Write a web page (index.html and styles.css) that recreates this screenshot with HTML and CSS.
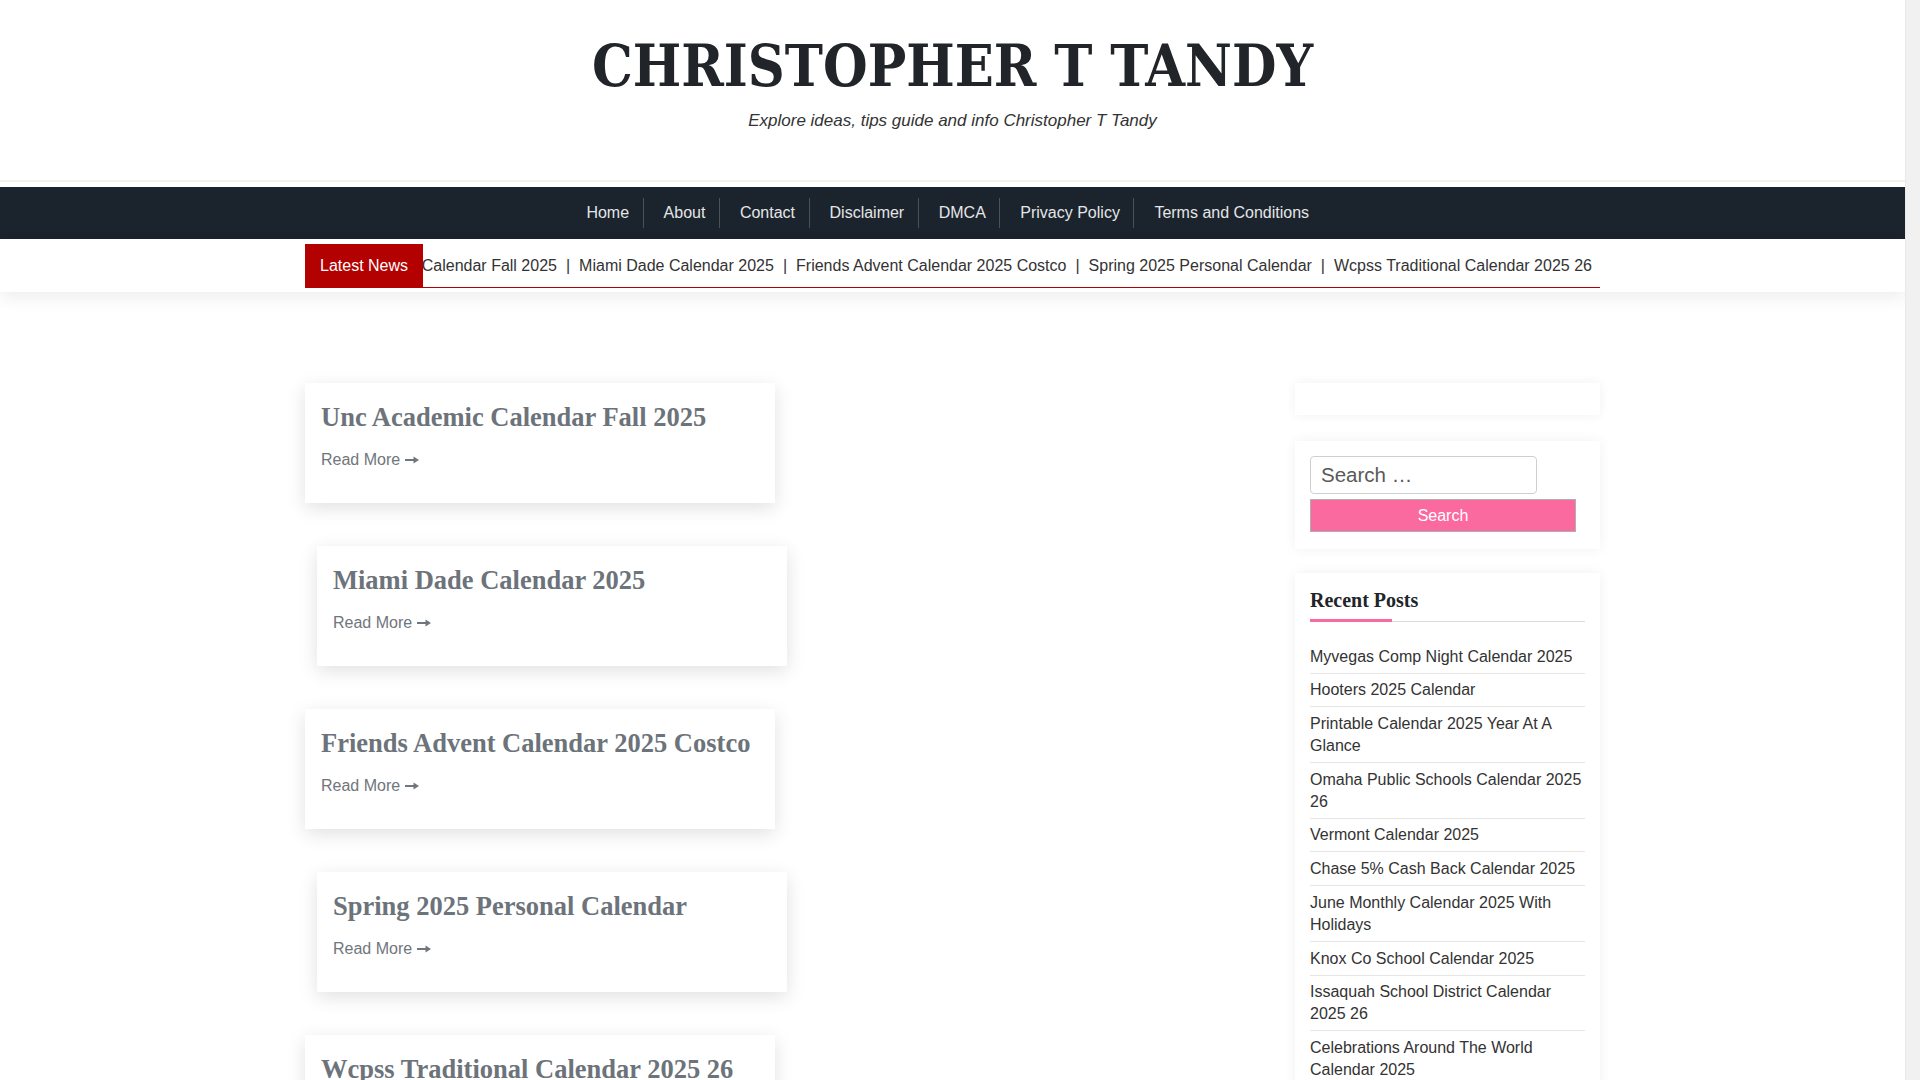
FILE: index.html
```html
<!DOCTYPE html>
<html lang="en">
<head>
<meta charset="utf-8">
<title>Christopher T Tandy</title>
<link rel="stylesheet" href="styles.css">
</head>
<body>
<div class="page">
<header class="site-header">
  <h1 class="site-title">CHRISTOPHER T TANDY</h1>
  <p class="site-desc">Explore ideas, tips guide and info Christopher T Tandy</p>
</header>
<nav class="main-nav">
  <ul class="menu">
    <li><a href="#">Home</a></li>
    <li><a href="#">About</a></li>
    <li><a href="#">Contact</a></li>
    <li><a href="#">Disclaimer</a></li>
    <li><a href="#">DMCA</a></li>
    <li><a href="#">Privacy Policy</a></li>
    <li><a href="#">Terms and Conditions</a></li>
  </ul>
</nav>
<div class="ticker-band">
  <div class="container ticker">
    <div class="ticker-label">Latest News</div>
    <div class="ticker-window">
      <div class="ticker-track"><a href="#">Unc Academic Calendar Fall 2025</a><span class="sep">|</span><a href="#">Miami Dade Calendar 2025</a><span class="sep">|</span><a href="#">Friends Advent Calendar 2025 Costco</a><span class="sep">|</span><a href="#">Spring 2025 Personal Calendar</a><span class="sep">|</span><a href="#">Wcpss Traditional Calendar 2025 26</a><span class="sep">|</span><a href="#">Myvegas Comp Night Calendar 2025</a></div>
    </div>
  </div>
</div>
<main class="container site-main">
  <section class="posts">
    <article class="card">
      <h2 class="card-title">Unc Academic Calendar Fall 2025</h2>
      <a class="read-more" href="#">Read More <svg class="arrow" viewBox="0 0 14 8" width="14" height="8"><rect x="0" y="3" width="9" height="2"/><polygon points="8.5,0.5 14,4 8.5,7.5"/></svg></a>
    </article>
    <article class="card shift">
      <h2 class="card-title">Miami Dade Calendar 2025</h2>
      <a class="read-more" href="#">Read More <svg class="arrow" viewBox="0 0 14 8" width="14" height="8"><rect x="0" y="3" width="9" height="2"/><polygon points="8.5,0.5 14,4 8.5,7.5"/></svg></a>
    </article>
    <article class="card">
      <h2 class="card-title">Friends Advent Calendar 2025 Costco</h2>
      <a class="read-more" href="#">Read More <svg class="arrow" viewBox="0 0 14 8" width="14" height="8"><rect x="0" y="3" width="9" height="2"/><polygon points="8.5,0.5 14,4 8.5,7.5"/></svg></a>
    </article>
    <article class="card shift">
      <h2 class="card-title">Spring 2025 Personal Calendar</h2>
      <a class="read-more" href="#">Read More <svg class="arrow" viewBox="0 0 14 8" width="14" height="8"><rect x="0" y="3" width="9" height="2"/><polygon points="8.5,0.5 14,4 8.5,7.5"/></svg></a>
    </article>
    <article class="card">
      <h2 class="card-title">Wcpss Traditional Calendar 2025 26</h2>
      <a class="read-more" href="#">Read More <svg class="arrow" viewBox="0 0 14 8" width="14" height="8"><rect x="0" y="3" width="9" height="2"/><polygon points="8.5,0.5 14,4 8.5,7.5"/></svg></a>
    </article>
  </section>
  <aside class="sidebar">
    <div class="widget widget-empty"></div>
    <div class="widget widget-search">
      <form class="search-form">
        <input class="search-field" type="search" placeholder="Search …">
        <button class="search-submit" type="button">Search</button>
      </form>
    </div>
    <div class="widget widget-recent">
      <h2 class="widget-title">Recent Posts</h2>
      <ul class="recent-list">
        <li><a href="#">Myvegas Comp Night Calendar 2025</a></li>
        <li><a href="#">Hooters 2025 Calendar</a></li>
        <li><a href="#">Printable Calendar 2025 Year At A Glance</a></li>
        <li><a href="#">Omaha Public Schools Calendar 2025 26</a></li>
        <li><a href="#">Vermont Calendar 2025</a></li>
        <li><a href="#">Chase 5% Cash Back Calendar 2025</a></li>
        <li><a href="#">June Monthly Calendar 2025 With Holidays</a></li>
        <li><a href="#">Knox Co School Calendar 2025</a></li>
        <li><a href="#">Issaquah School District Calendar 2025 26</a></li>
        <li><a href="#">Celebrations Around The World Calendar 2025</a></li>
      </ul>
    </div>
  </aside>
</main>
</div>
<div class="scrollbar"></div>
</body>
</html>
```
FILE: styles.css
```css
html, body {
  margin: 0;
  padding: 0;
}
body {
  display: flex;
  align-items: stretch;
  font-family: "Liberation Sans", Arial, sans-serif;
  font-size: 16px;
  color: #333;
  background: #fff;
}
a {
  color: inherit;
  text-decoration: none;
}
.page {
  width: 1905px;
  flex: none;
}
.scrollbar {
  width: 15px;
  flex: none;
  background: #f1f1f1;
  border-left: 1px solid #e9e9e9;
  box-sizing: border-box;
}

/* header */
.site-header {
  height: 182px;
  box-sizing: border-box;
  padding-top: 30px;
  text-align: center;
  border-bottom: 2px solid #f6f1e8;
}
.site-title {
  margin: 0;
  font-family: "DejaVu Serif", "Liberation Serif", serif;
  font-stretch: condensed;
  font-weight: bold;
  font-size: 57px;
  line-height: 72px;
  color: #212529;
}
.site-desc {
  margin: 7px 0 0;
  font-style: italic;
  font-size: 17px;
  line-height: 24px;
  color: #333;
}

/* nav */
.main-nav {
  margin-top: 5px;
  height: 52px;
  background: #1b232c;
  display: flex;
  justify-content: center;
}
.menu {
  display: flex;
  align-items: center;
  list-style: none;
  margin: 0;
  padding: 0 16px 0 0;
}
.menu li {
  padding: 0 13.5px 0 20px;
  line-height: 30px;
  border-right: 1px solid #48505a;
  color: #e4e6e8;
  font-size: 16px;
}
.menu li:last-child {
  border-right: 0;
}

/* ticker */
.ticker-band {
  background: #fff;
  padding: 5px 0 4px;
  box-shadow: 0 6px 16px rgba(0, 0, 0, 0.07);
}
.container {
  width: 1295px;
  margin: 0 auto;
}
.ticker {
  display: flex;
  height: 44px;
  box-sizing: border-box;
  border-bottom: 1px solid #b30000;
}
.ticker-label {
  flex: none;
  background: #b30000;
  color: #fff;
  padding: 0 15px;
  line-height: 43px;
  font-size: 16px;
}
.ticker-window {
  flex: 1;
  overflow: hidden;
  line-height: 43px;
}
.ticker-track {
  white-space: nowrap;
  transform: translateX(-108px);
  color: #333;
}
.ticker-track .sep {
  margin: 0 9px;
}

/* main */
.site-main {
  display: flex;
  justify-content: space-between;
  padding-top: 91px;
}
.posts {
  flex: 1;
}
.card {
  width: 470px;
  height: 120px;
  box-sizing: border-box;
  padding: 18px 16px 0;
  margin-bottom: 43px;
  background: #fff;
  box-shadow: 0 5px 18px rgba(0, 0, 0, 0.12);
}
.card.shift {
  margin-left: 12px;
}
.card-title {
  margin: 0 0 15px;
  font-family: "Liberation Serif", "Times New Roman", serif;
  font-weight: bold;
  font-size: 26.5px;
  line-height: 32px;
  color: #6c737a;
  white-space: nowrap;
}
.read-more {
  display: inline-flex;
  align-items: center;
  gap: 5px;
  font-size: 16px;
  line-height: 24px;
  color: #70767c;
}
.arrow {
  fill: currentColor;
}

/* sidebar */
.sidebar {
  width: 305px;
  flex: none;
}
.widget {
  background: #fff;
  box-shadow: 0 0 12px rgba(0, 0, 0, 0.06);
  box-sizing: border-box;
  padding: 15px;
  margin-bottom: 24px;
}
.widget-empty {
  height: 32px;
  padding: 0;
  margin-bottom: 26px;
}
.widget-search {
  padding: 15px 15px 17px;
}
.search-form {
  display: flex;
  flex-direction: column;
  gap: 5px;
}
.search-field {
  width: 227px;
  height: 38px;
  box-sizing: border-box;
  border: 1px solid #ccd0d5;
  border-radius: 4px;
  padding: 0 10px;
  font-family: "Liberation Sans", Arial, sans-serif;
  font-size: 20.5px;
  color: #555;
  outline: none;
}
.search-field::placeholder {
  color: #595959;
}
.search-submit {
  width: 266px;
  height: 33px;
  box-sizing: border-box;
  border: 1px solid #b0b0b0;
  background: #fa6a9f;
  color: #fff;
  font-family: "Liberation Sans", Arial, sans-serif;
  font-size: 16px;
  padding: 0;
}
.widget-title {
  margin: 0 0 18px;
  padding-bottom: 10px;
  font-family: "Liberation Serif", "Times New Roman", serif;
  font-weight: bold;
  font-size: 20px;
  line-height: 24px;
  color: #212529;
  background:
    linear-gradient(#fa6a9f, #fa6a9f) left bottom / 82px 3px no-repeat,
    linear-gradient(#dcdcdc, #dcdcdc) left bottom / 100% 1px no-repeat;
}
.recent-list {
  list-style: none;
  margin: 0;
  padding: 0;
}
.recent-list li {
  padding: 5.7px 0 5px;
  line-height: 22px;
  border-bottom: 1px solid #e6e6e6;
  color: #333;
  font-size: 16px;
}
```
